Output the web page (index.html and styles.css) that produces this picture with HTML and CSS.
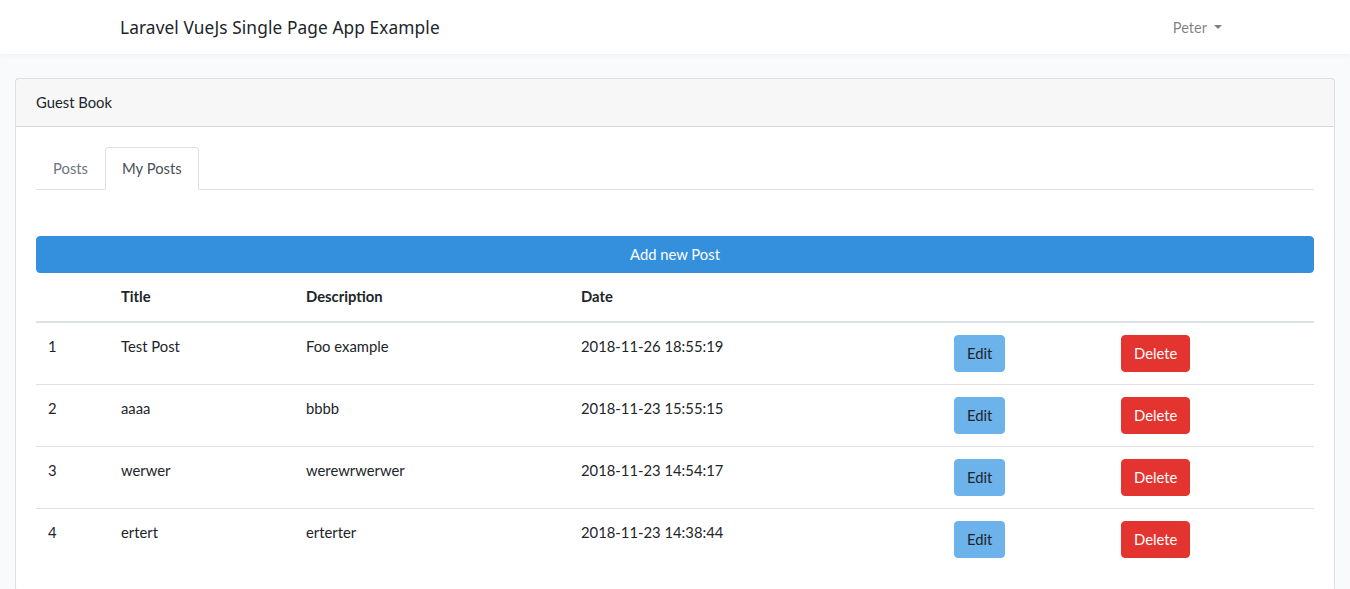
FILE: index.html
```html
<!DOCTYPE html>
<html>
<head>
<meta charset="utf-8">
<link rel="stylesheet" href="styles.css">
</head>
<body>
<nav class="navbar">
  <div class="container nav-inner">
    <a class="brand">Laravel VueJs Single Page App Example</a>
    <a class="user">Peter <span class="caret"></span></a>
  </div>
</nav>
<main class="main">
  <div class="card">
    <div class="card-header">Guest Book</div>
    <div class="card-body">
      <ul class="tabs">
        <li class="tab">Posts</li>
        <li class="tab active">My Posts</li>
      </ul>
      <div class="tab-content">
        <button class="btn-add">Add new Post</button>
        <table class="table">
          <colgroup>
            <col class="c1"><col class="c2"><col class="c3"><col class="c4"><col class="c5"><col class="c6">
          </colgroup>
          <thead>
            <tr><th></th><th>Title</th><th>Description</th><th>Date</th><th></th><th></th></tr>
          </thead>
          <tbody>
            <tr><td>1</td><td>Test Post</td><td>Foo example</td><td>2018-11-26 18:55:19</td><td><button class="btn btn-edit">Edit</button></td><td><button class="btn btn-del">Delete</button></td></tr>
            <tr><td>2</td><td>aaaa</td><td>bbbb</td><td>2018-11-23 15:55:15</td><td><button class="btn btn-edit">Edit</button></td><td><button class="btn btn-del">Delete</button></td></tr>
            <tr><td>3</td><td>werwer</td><td>werewrwerwer</td><td>2018-11-23 14:54:17</td><td><button class="btn btn-edit">Edit</button></td><td><button class="btn btn-del">Delete</button></td></tr>
            <tr><td>4</td><td>ertert</td><td>erterter</td><td>2018-11-23 14:38:44</td><td><button class="btn btn-edit">Edit</button></td><td><button class="btn btn-del">Delete</button></td></tr>
          </tbody>
        </table>
      </div>
    </div>
  </div>
</main>
</body>
</html>
```
FILE: styles.css
```css
* { box-sizing: border-box; }
html, body { margin: 0; padding: 0; }
body {
  background: #f8fafc;
  font-family: Lato, "Open Sans", sans-serif;
  font-size: 14.8px;
  line-height: 23px;
  color: #212529;
}
.navbar {
  background: #fff;
  box-shadow: 0 2px 4px rgba(0,0,0,.04);
  padding: 8px 0;
}
.container {
  width: 1140px;
  margin: 0 auto;
  padding: 0 15px;
}
.nav-inner {
  display: flex;
  justify-content: space-between;
  align-items: center;
  height: 38px;
}
.brand {
  font-family: "Noto Sans", Lato, sans-serif;
  font-size: 17.3px;
  color: #212529;
  letter-spacing: 0.1px;
}
.user {
  color: rgba(0,0,0,.5);
  font-size: 14.6px;
  padding-right: 8px;
  display: flex;
  align-items: center;
}
.caret {
  display: inline-block;
  margin-left: 7px;
  width: 0; height: 0;
  border-top: 4.5px solid rgba(0,0,0,.5);
  border-left: 4.5px solid transparent;
  border-right: 4.5px solid transparent;
}
.main { padding: 24px 15px; }
.card {
  background: #fff;
  border: 1px solid rgba(0,0,0,.125);
  border-radius: 4px;
}
.card-header {
  background: rgba(0,0,0,.03);
  border-bottom: 1px solid rgba(0,0,0,.125);
  padding: 12px 20px;
}
.card-body { padding: 20px; }
.tabs {
  list-style: none;
  margin: 0;
  padding: 0;
  display: flex;
  border-bottom: 1px solid #dee2e6;
}
.tab {
  padding: 9px 16px;
  border: 1px solid transparent;
  border-top-left-radius: 4px;
  border-top-right-radius: 4px;
  margin-bottom: -1px;
  color: #6c757d;
}
.tab.active {
  color: #495057;
  border-color: #dee2e6 #dee2e6 #fff;
  background: #fff;
}
.tab-content { padding-top: 46px; }
.btn-add {
  display: block;
  width: 100%;
  background: #3490dc;
  color: #fff;
  border: 1px solid #3490dc;
  border-radius: 4px;
  font-family: inherit;
  font-size: 14.8px;
  line-height: 23px;
  padding: 6px 12px;
}
.table {
  width: 100%;
  border-collapse: collapse;
  table-layout: fixed;
}
.c1 { width: 73px; }
.c2 { width: 185px; }
.c3 { width: 275px; }
.c4 { width: 373px; }
.c5 { width: 167px; }
.table th, .table td {
  padding: 12px;
  text-align: left;
  vertical-align: top;
  border-top: 1px solid #dee2e6;
}
.table th {
  border-top: none;
  border-bottom: 2px solid #dee2e6;
  font-weight: 700;
  padding-bottom: 13px;
}
.btn {
  font-family: inherit;
  font-size: 14.8px;
  line-height: 23px;
  padding: 6px 12px;
  border-radius: 4px;
  border: 1px solid transparent;
}
.btn-edit { background: #6cb2eb; border-color: #6cb2eb; color: #212529; }
.btn-del { background: #e3342f; border-color: #e3342f; color: #fff; }
```
